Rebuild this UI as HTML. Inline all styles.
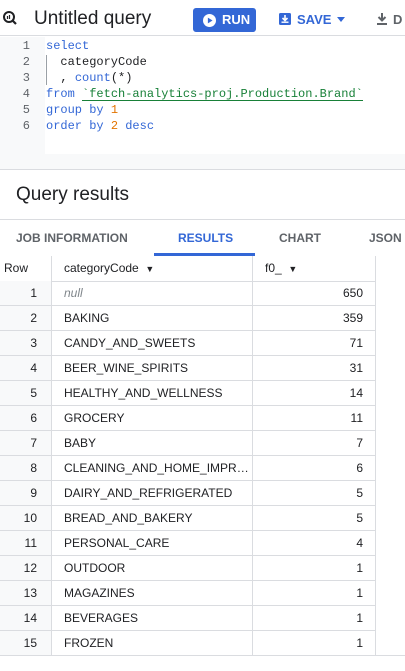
<!DOCTYPE html>
<html><head><style>
*{margin:0;padding:0;box-sizing:border-box}
body{width:405px;height:671px;overflow:hidden;background:#fff;font-family:"Liberation Sans",Arial,sans-serif;color:#202124;position:relative}
.abs{position:absolute}
.code{font-family:"Liberation Mono",monospace;font-size:12px;line-height:16px;position:absolute;left:46px;white-space:pre}
.ln{position:absolute;left:0;width:30px;text-align:right;font-family:"Liberation Mono",monospace;font-size:12px;line-height:16px;color:#5f6368}
.kw{color:#3367d6}.num{color:#e37400}.str{color:#188038}
.tab{position:absolute;top:231px;font-size:12px;font-weight:bold;color:#5f6368;letter-spacing:0}
.row{position:absolute;left:0;width:376px;height:25px;border-bottom:1px solid #dadce0;font-size:12px;color:#202124}
.row .n{position:absolute;left:0;width:52px;height:24px;background:#f8f9fa;border-right:1px solid #dadce0;text-align:right;padding-right:14px;line-height:24px}
.row .c{position:absolute;left:64px;line-height:24px}
.row .v{position:absolute;left:252px;width:124px;height:24px;border-left:1px solid #dadce0;border-right:1px solid #dadce0;text-align:right;padding-right:12px;line-height:24px}
</style></head><body>
<div class="abs" style="left:0;top:0;width:405px;height:36px;border-bottom:1px solid #dadce0"></div>
<svg class="abs" style="left:2px;top:10px" width="16" height="16" viewBox="0 0 16 16"><circle cx="7" cy="7" r="5" fill="none" stroke="#202124" stroke-width="2"/><path d="M10.5 10.5L14 14" stroke="#202124" stroke-width="2.2"/><path d="M5.5 6v3M7.5 5v4" stroke="#202124" stroke-width="1.2"/></svg>
<div class="abs" style="left:34px;top:8px;font-size:19px">Untitled query</div>
<div class="abs" style="left:193px;top:8px;width:63px;height:24px;background:#3367d6;border-radius:3px;color:#fff;font-size:13px;font-weight:bold;line-height:24px;padding-left:29px">RUN</div>
<svg class="abs" style="left:203px;top:14px" width="13" height="13" viewBox="0 0 12 12"><circle cx="6" cy="6" r="6" fill="#fff"/><path d="M4.5 3.3L8.8 6 4.5 8.7z" fill="#3367d6"/></svg>
<svg class="abs" style="left:278px;top:12px" width="14" height="14" viewBox="0 0 14 14"><rect x="1" y="1" width="12" height="12" rx="1.5" fill="#3367d6"/><path d="M7 3v5M4.5 6L7 8.5 9.5 6" stroke="#fff" stroke-width="1.6" fill="none"/><rect x="3.5" y="9.5" width="7" height="1.4" fill="#fff"/></svg>
<div class="abs" style="left:297px;top:12px;font-size:13px;font-weight:bold;color:#3367d6">SAVE</div>
<div class="abs" style="left:337px;top:17px;border:4px solid transparent;border-top:5px solid #3367d6"></div>
<svg class="abs" style="left:376px;top:12px" width="12" height="14" viewBox="0 0 12 14"><path d="M6 1v7M2.5 5L6 8.5 9.5 5" stroke="#5f6368" stroke-width="2" fill="none"/><rect x="1" y="11" width="10" height="2" fill="#5f6368"/></svg>
<div class="abs" style="left:393px;top:12px;font-size:13px;font-weight:bold;color:#5f6368">D</div>

<div class="abs" style="left:0;top:37px;width:45px;height:117px;background:#f8f9fa"></div>
<div class="abs" style="left:46px;top:55px;width:1px;height:30px;background:#9aa0a6"></div>
<div class="ln" style="top:38px">1<br>2<br>3<br>4<br>5<br>6</div>
<div class="code" style="top:38px"><span class="kw">select</span>
  categoryCode
  , <span class="kw">count</span>(*)
<span class="kw">from</span> <span class="str">`fetch-analytics-proj.Production.Brand`</span>
<span class="kw">group by</span> <span class="num">1</span>
<span class="kw">order by</span> <span class="num">2</span> <span class="kw">desc</span></div>
<div class="abs" style="left:82px;top:100px;width:281px;height:1px;background:#188038"></div>
<div class="abs" style="left:0;top:154px;width:405px;height:16px;background:#f8f9fa;border-bottom:1px solid #dadce0"></div>

<div class="abs" style="left:16px;top:184px;font-size:19px">Query results</div>
<div class="abs" style="left:0;top:219px;width:405px;height:1px;background:#dadce0"></div>
<div class="tab" style="left:16px">JOB INFORMATION</div>
<div class="tab" style="left:178px;color:#3367d6">RESULTS</div>
<div class="tab" style="left:279px">CHART</div>
<div class="tab" style="left:369px">JSON</div>
<div class="abs" style="left:154px;top:253px;width:101px;height:3px;background:#3367d6"></div>

<div class="row" style="top:256px;height:26px">
<div class="n" style="height:25px;background:#fff;text-align:left;padding-left:4px;line-height:24px">Row</div>
<div class="c">categoryCode &nbsp;<span style="font-size:9px">▼</span></div>
<div class="v" style="height:25px;text-align:left;padding-left:12px">f0_ &nbsp;<span style="font-size:9px">▼</span></div>
</div>

<div class="row" style="top:281px"><div class="n">1</div><div class="c" style="color:#80868b;font-style:italic">null</div><div class="v">650</div></div>
<div class="row" style="top:306px"><div class="n">2</div><div class="c">BAKING</div><div class="v">359</div></div>
<div class="row" style="top:331px"><div class="n">3</div><div class="c">CANDY_AND_SWEETS</div><div class="v">71</div></div>
<div class="row" style="top:356px"><div class="n">4</div><div class="c">BEER_WINE_SPIRITS</div><div class="v">31</div></div>
<div class="row" style="top:381px"><div class="n">5</div><div class="c">HEALTHY_AND_WELLNESS</div><div class="v">14</div></div>
<div class="row" style="top:406px"><div class="n">6</div><div class="c">GROCERY</div><div class="v">11</div></div>
<div class="row" style="top:431px"><div class="n">7</div><div class="c">BABY</div><div class="v">7</div></div>
<div class="row" style="top:456px"><div class="n">8</div><div class="c">CLEANING_AND_HOME_IMPR…</div><div class="v">6</div></div>
<div class="row" style="top:481px"><div class="n">9</div><div class="c">DAIRY_AND_REFRIGERATED</div><div class="v">5</div></div>
<div class="row" style="top:506px"><div class="n">10</div><div class="c">BREAD_AND_BAKERY</div><div class="v">5</div></div>
<div class="row" style="top:531px"><div class="n">11</div><div class="c">PERSONAL_CARE</div><div class="v">4</div></div>
<div class="row" style="top:556px"><div class="n">12</div><div class="c">OUTDOOR</div><div class="v">1</div></div>
<div class="row" style="top:581px"><div class="n">13</div><div class="c">MAGAZINES</div><div class="v">1</div></div>
<div class="row" style="top:606px"><div class="n">14</div><div class="c">BEVERAGES</div><div class="v">1</div></div>
<div class="row" style="top:631px;width:405px"><div class="n">15</div><div class="c">FROZEN</div><div class="v">1</div></div>
</body></html>
